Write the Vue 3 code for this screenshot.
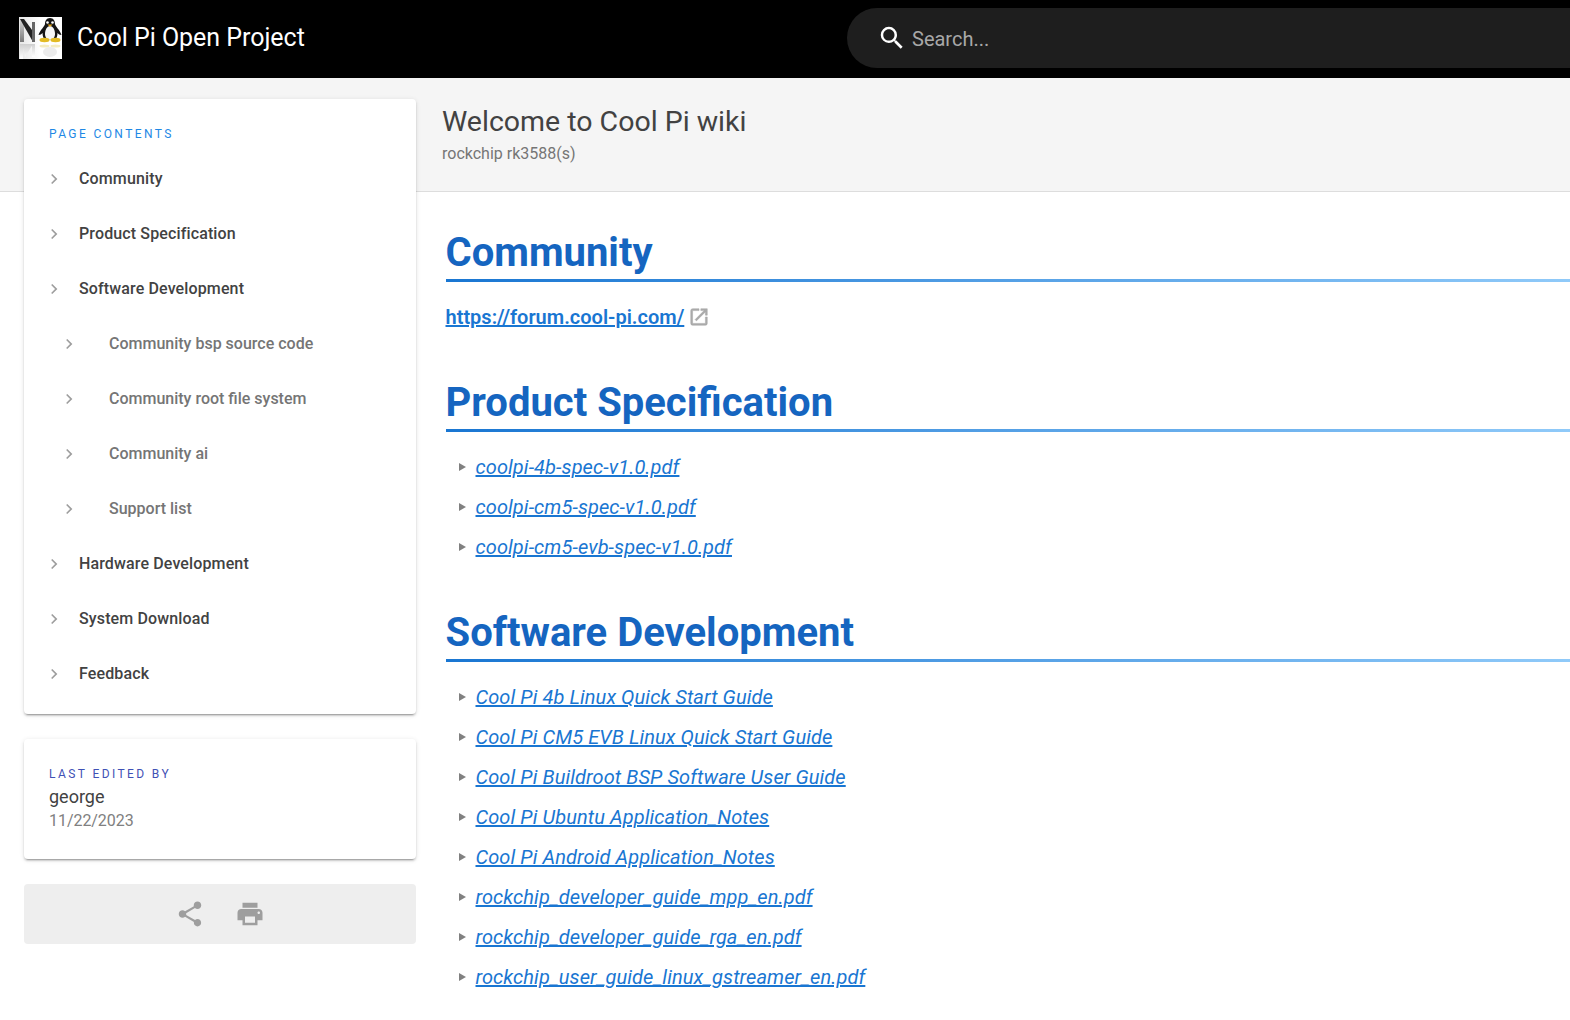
<script setup>
const toc = [
  { title: 'Community' },
  { title: 'Product Specification' },
  { title: 'Software Development' },
  { title: 'Community bsp source code', sub: true },
  { title: 'Community root file system', sub: true },
  { title: 'Community ai', sub: true },
  { title: 'Support list', sub: true },
  { title: 'Hardware Development' },
  { title: 'System Download' },
  { title: 'Feedback' },
]

const specs = ['coolpi-4b-spec-v1.0.pdf', 'coolpi-cm5-spec-v1.0.pdf', 'coolpi-cm5-evb-spec-v1.0.pdf']

const software = [
  'Cool Pi 4b Linux Quick Start Guide',
  'Cool Pi CM5 EVB Linux Quick Start Guide',
  'Cool Pi Buildroot BSP Software User Guide',
  'Cool Pi Ubuntu Application_Notes',
  'Cool Pi Android Application_Notes',
  'rockchip_developer_guide_mpp_en.pdf',
  'rockchip_developer_guide_rga_en.pdf',
  'rockchip_user_guide_linux_gstreamer_en.pdf',
]
</script>

<template>
  <div class="app">
    <header class="topbar">
      <svg class="logo" viewBox="0 0 43 42">
        <defs>
          <linearGradient id="stem" x1="0" y1="0" x2="0" y2="1">
            <stop offset="0" stop-color="#d8d8d8" />
            <stop offset="1" stop-color="#777" />
          </linearGradient>
          <linearGradient id="mirror" x1="0" y1="0" x2="0" y2="1">
            <stop offset="0" stop-color="#cfcfcf" />
            <stop offset="1" stop-color="#fff" />
          </linearGradient>
          <linearGradient id="paper" x1="0" y1="0" x2="1" y2="0">
            <stop offset="0" stop-color="#e6e6e6" />
            <stop offset=".5" stop-color="#fff" />
          </linearGradient>
        </defs>
        <rect width="43" height="42" fill="url(#paper)" />
        <path d="M1 2h4v23H1z" fill="url(#stem)" />
        <path d="M1 2h4l11 15v8h-2z" fill="#222" />
        <path d="M13 5h3v20h-3z" fill="#666" />
        <path d="M1 42V27h3v15zM3 27h11L6 40z" fill="url(#mirror)" />
        <path d="M13 27h3v13h-3z" fill="url(#mirror)" />
        <path d="M31 1c-3.500 0-5 3-5 6 0 2-5 6-6.500 11 2 0 3-1 4-2 0 3 1 6 3 7h9c2-1 3-4 3-7 1 1 2 2 4 2-1.500-5-6.500-9-6.500-11 0-3-1.500-6-5-6z" fill="#151515" />
        <path d="M31 9c-3 0-5 4-5 8 0 3 2 6 5 6s5-3 5-6c0-4-2-8-5-8z" fill="#f6f6f6" />
        <circle cx="28.500" cy="5.500" r="1.300" fill="#fff" />
        <circle cx="33.500" cy="5.500" r="1.300" fill="#fff" />
        <path d="M28.500 7.500h5L31 10z" fill="#e8a91b" />
        <ellipse cx="25.500" cy="23" rx="5" ry="2.200" fill="#e3bb25" />
        <ellipse cx="36.500" cy="23" rx="5" ry="2.200" fill="#e3bb25" />
        <ellipse cx="25.500" cy="29" rx="5" ry="1.500" fill="#f4ecc0" />
        <ellipse cx="36.500" cy="29" rx="5" ry="1.500" fill="#f4ecc0" />
        <ellipse cx="31" cy="35" rx="7" ry="5" fill="#ececec" />
      </svg>
      <div class="brand">Cool Pi Open Project</div>
      <div class="search">
        <svg class="search-icon" viewBox="0 0 24 24">
          <path fill="#fff" d="M9.500 3A6.500 6.500 0 0 1 16 9.500c0 1.610-.59 3.090-1.560 4.230l.27.27h.79l5 5-1.500 1.500-5-5v-.79l-.27-.27A6.516 6.516 0 0 1 9.500 16 6.500 6.500 0 0 1 3 9.500 6.500 6.500 0 0 1 9.500 3zm0 2C7 5 5 7 5 9.500S7 14 9.500 14 14 12 14 9.500 12 5 9.500 5z" />
        </svg>
        <span class="search-text">Search...</span>
      </div>
    </header>

    <div class="page">
      <div class="band"></div>

      <aside class="side">
        <div class="card toc">
          <div class="overline">PAGE CONTENTS</div>
          <div v-for="item in toc" :key="item.title" class="toc-row" :class="{ sub: item.sub }">
            <svg class="chevron" viewBox="0 0 24 24">
              <path d="M8.600 16.600 13.200 12 8.600 7.400 10 6l6 6-6 6z" />
            </svg>
            <span>{{ item.title }}</span>
          </div>
        </div>

        <div class="card edited">
          <div class="overline indigo">LAST EDITED BY</div>
          <div class="author">george</div>
          <div class="date">11/22/2023</div>
        </div>

        <div class="actions">
          <svg viewBox="0 0 24 24">
            <path d="M18 16.080c-.76 0-1.440.3-1.960.77L8.910 12.700c.05-.23.09-.46.09-.7s-.04-.47-.09-.7l7.050-4.110c.54.5 1.250.81 2.040.81 1.660 0 3-1.340 3-3s-1.340-3-3-3-3 1.340-3 3c0 .24.04.47.09.7L8.040 9.810C7.500 9.310 6.790 9 6 9c-1.660 0-3 1.340-3 3s1.340 3 3 3c.79 0 1.500-.31 2.040-.81l7.120 4.160c-.05.21-.08.43-.08.65 0 1.610 1.310 2.920 2.920 2.920s2.920-1.310 2.920-2.920-1.310-2.920-2.920-2.920z" />
          </svg>
          <svg viewBox="0 0 24 24">
            <path d="M19 8H5c-1.660 0-3 1.340-3 3v6h4v4h12v-4h4v-6c0-1.660-1.340-3-3-3zm-3 11H8v-5h8v5zm3-7c-.55 0-1-.45-1-1s.45-1 1-1 1 .45 1 1-.45 1-1 1zm-1-9H6v4h12V3z" />
          </svg>
        </div>
      </aside>

      <div class="page-title">
        <h1>Welcome to Cool Pi wiki</h1>
        <div class="page-desc">rockchip rk3588(s)</div>
      </div>

      <main class="content">
        <h2>Community</h2>
        <p class="forum">
          <a href="#">https://forum.cool-pi.com/</a>
          <svg class="external" viewBox="0 0 24 24">
            <path d="M19 19H5V5h7V3H5a2 2 0 0 0-2 2v14a2 2 0 0 0 2 2h14a2 2 0 0 0 2-2v-7h-2v7zM14 3v2h3.590l-9.830 9.830 1.410 1.410L19 6.410V10h2V3h-7z" />
          </svg>
        </p>

        <h2>Product Specification</h2>
        <ul>
          <li v-for="name in specs" :key="name"><a href="#">{{ name }}</a></li>
        </ul>

        <h2>Software Development</h2>
        <ul>
          <li v-for="name in software" :key="name"><a href="#">{{ name }}</a></li>
        </ul>
      </main>
    </div>
  </div>
</template>

<style>
html,
body {
  margin: 0;
  height: 100%;
  overflow: hidden;
  background: #fff;
}
</style>

<style scoped>
.app {
  font-family: Roboto, "Liberation Sans", sans-serif;
  color: #333;
  height: 1020px;
  overflow: hidden;
}

.topbar {
  height: 78px;
  background: #000;
  display: flex;
  align-items: center;
  padding: 0 0 2px 19px;
  box-sizing: border-box;
}

.logo {
  width: 43px;
  height: 42px;
  flex: none;
}

.brand {
  margin: 0 0 1px 15px;
  color: #fff;
  font-size: 25px;
  letter-spacing: -.03px;
  white-space: nowrap;
}

.search {
  margin-left: auto;
  width: 723px;
  height: 60px;
  background: #1e1e1e;
  border-radius: 30px 0 0 30px;
  display: flex;
  align-items: center;
  padding-left: 30px;
  box-sizing: border-box;
}

.search-icon {
  width: 30px;
  height: 30px;
}

.search-text {
  margin: 2px 0 0 5px;
  font-size: 20px;
  color: #a8a8a8;
}

.page {
  display: grid;
  grid-template-columns: 416px 1fr;
  grid-template-rows: 114px 1fr;
}

.band {
  grid-column: 1 / 3;
  grid-row: 1;
  background: #f5f5f5;
  border-bottom: 1px solid #ddd;
}

.side {
  grid-column: 1;
  grid-row: 1 / 3;
  padding: 21px 0 0 24px;
  display: flex;
  flex-direction: column;
  gap: 25px;
  z-index: 1;
}

.card {
  background: #fff;
  border-radius: 4px;
  box-shadow: 0 3px 1px -2px rgba(0, 0, 0, .2), 0 2px 2px 0 rgba(0, 0, 0, .14), 0 1px 5px 0 rgba(0, 0, 0, .12);
}

.overline {
  font-size: 12px;
  line-height: 20px;
  letter-spacing: 2.4px;
  color: #1e88e5;
}

.overline.indigo {
  color: #3f51b5;
}

.toc {
  height: 615px;
  box-sizing: border-box;
  padding-top: 25px;
}

.toc .overline {
  padding-left: 25px;
  margin-bottom: 7px;
}

.toc-row {
  height: 55px;
  display: flex;
  align-items: center;
  padding-left: 18px;
  font-size: 16px;
  font-weight: 500;
  letter-spacing: .13px;
  color: #424242;
}

.toc-row span {
  margin-left: 13px;
}

.toc-row.sub {
  padding-left: 33px;
  letter-spacing: 0;
  color: #757575;
}

.toc-row.sub span {
  margin-left: 28px;
}

.chevron {
  width: 24px;
  height: 24px;
  fill: #9e9e9e;
  transform: scale(.85);
}

.edited {
  height: 120px;
  box-sizing: border-box;
  padding: 25px 25px 0;
}

.author {
  font-size: 18px;
  line-height: 26px;
  color: #424242;
}

.date {
  font-size: 16px;
  line-height: 22px;
  letter-spacing: -.05px;
  color: #808080;
}

.actions {
  height: 60px;
  background: #eee;
  border-radius: 4px;
  display: flex;
  align-items: center;
  justify-content: center;
  gap: 30px;
}

.actions svg {
  width: 30px;
  height: 30px;
  fill: #9e9e9e;
}

.page-title {
  grid-column: 2;
  grid-row: 1;
  padding: 24px 0 0 26px;
  z-index: 1;
}

.page-title h1 {
  margin: 0;
  font-size: 28.5px;
  line-height: 40px;
  font-weight: 400;
  color: #424242;
}

.page-desc {
  font-size: 16px;
  line-height: 24px;
  color: #757575;
}

.content {
  grid-column: 2;
  grid-row: 2;
  padding: 30px 0 0 29.500px;
}

h2 {
  margin: 0;
  font-size: 40px;
  line-height: 62px;
  font-weight: 700;
  color: #1565c0;
  height: 57px;
  border-bottom: 3px solid transparent;
  border-image: linear-gradient(90deg, #1976d2, #90caf9) 1;
}

.forum {
  margin: 21px 0 0;
  height: 69px;
  display: flex;
  align-items: flex-start;
  font-size: 20px;
  line-height: 28px;
  font-weight: 600;
}

a {
  color: #1976d2;
  text-decoration: underline;
}

.external {
  width: 22px;
  height: 22px;
  margin: 3px 0 0 4px;
  fill: #aaa;
  stroke: #aaa;
  stroke-width: .6;
}

ul {
  list-style: none;
  margin: 15px 0 35px;
  padding: 0;
}

li {
  height: 40px;
  line-height: 40px;
  padding-left: 30px;
  font-size: 20px;
  font-style: italic;
  letter-spacing: .09px;
  position: relative;
}

li::before {
  content: '';
  position: absolute;
  left: 13px;
  top: 16px;
  border-left: 7px solid #808080;
  border-top: 4px solid transparent;
  border-bottom: 4px solid transparent;
}
</style>
